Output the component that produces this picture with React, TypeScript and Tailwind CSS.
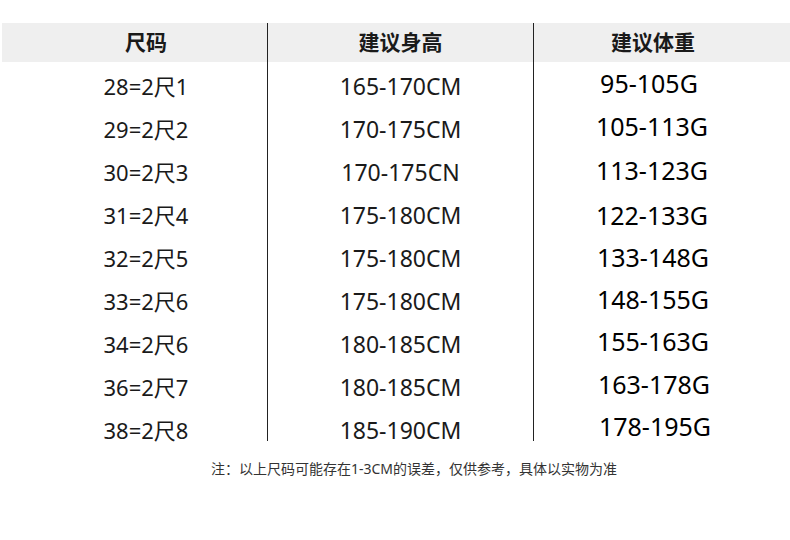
import React from "react";

const rows: { size: string; height: string; weight: string; wCls: string }[] = [
  { size: "28=2尺1", height: "165-170CM", weight: "95-105G", wCls: "mt-[-6px] ml-[-8px]" },
  { size: "29=2尺2", height: "170-175CM", weight: "105-113G", wCls: "mt-[-6px] ml-[-2px]" },
  { size: "30=2尺3", height: "170-175CN", weight: "113-123G", wCls: "mt-[-4px] ml-[-2px]" },
  { size: "31=2尺4", height: "175-180CM", weight: "122-133G", wCls: "mt-0 ml-[-2px]" },
  { size: "32=2尺5", height: "175-180CM", weight: "133-148G", wCls: "mt-[-2px] ml-0" },
  { size: "33=2尺6", height: "175-180CM", weight: "148-155G", wCls: "mt-[-4px] ml-0" },
  { size: "34=2尺6", height: "180-185CM", weight: "155-163G", wCls: "mt-[-6px] ml-0" },
  { size: "36=2尺7", height: "180-185CM", weight: "163-178G", wCls: "mt-[-6px] ml-[2px]" },
  { size: "38=2尺8", height: "185-190CM", weight: "178-195G", wCls: "mt-[-8px] ml-[4px]" },
];

const font = { fontFamily: '"Noto Sans", "Noto Sans CJK SC", sans-serif' };

export default function App() {
  return (
    <div className="w-[790px] h-[540px] bg-white text-[#1a1a1a]" style={font}>
      <div className="pt-[23px] pl-[2px] flex">
        <div className="w-[265px] h-[418px] flex flex-col">
          <div className="h-[39px] shrink-0 bg-[#efefef] flex items-center justify-center pl-[23px] text-[21px] font-bold">
            尺码
          </div>
          <div className="pt-[3px]">
            {rows.map((r) => (
              <div key={r.size} className="h-[43px] flex items-center justify-center pl-[23px] text-[22px]">
                {r.size}
              </div>
            ))}
          </div>
        </div>
        <div className="w-[267px] h-[418px] flex flex-col border-x-[1.5px] border-[#222]">
          <div className="h-[39px] shrink-0 bg-[#efefef] flex items-center justify-center text-[21px] font-bold">
            建议身高
          </div>
          <div className="pt-[3px]">
            {rows.map((r, i) => (
              <div key={i} className="h-[43px] flex items-center justify-center text-[23px]">
                {r.height}
              </div>
            ))}
          </div>
        </div>
        <div className="flex-1 h-[418px] flex flex-col">
          <div className="h-[39px] shrink-0 bg-[#efefef] flex items-center justify-center pr-[18px] text-[21px] font-bold">
            建议体重
          </div>
          <div className="pt-[3px]">
            {rows.map((r, i) => (
              <div key={i} className="h-[43px] flex items-center justify-center pr-[18px] text-[25px] text-black">
                <span className={r.wCls}>{r.weight}</span>
              </div>
            ))}
          </div>
        </div>
      </div>
      <div className="mt-[17px] pl-[211px] text-[14px] text-[#333]">
        注：以上尺码可能存在1-3CM的误差，仅供参考，具体以实物为准
      </div>
    </div>
  );
}
